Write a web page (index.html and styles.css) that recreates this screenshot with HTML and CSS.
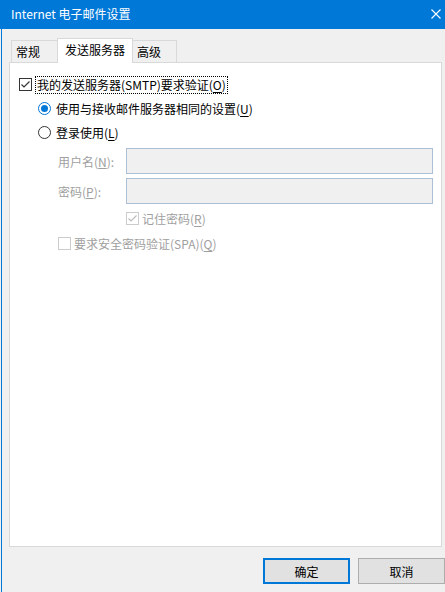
FILE: index.html
```html
<!DOCTYPE html>
<html lang="zh-CN">
<head>
    <meta charset="UTF-8">
    <title>Internet 电子邮件设置</title>
    <link rel="stylesheet" href="styles.css">
</head>
<body>
    <div class="window">
        <div class="titlebar">
            <span class="title">Internet 电子邮件设置</span>
            <svg class="close" width="10" height="10" viewBox="0 0 10 10">
                <path d="M0.5 0.5 L9.5 9.5 M9.5 0.5 L0.5 9.5" stroke="#fff" stroke-width="1.1" fill="none"/>
            </svg>
        </div>

        <div class="client">
            <div class="tabs">
                <div class="tab tab-first">常规</div>
                <div class="tab active">发送服务器</div>
                <div class="tab tab-last">高级</div>
            </div>

            <div class="panel">
                <div class="row row-auth">
                    <span class="check">
                        <svg width="11" height="11" viewBox="0 0 11 11"><path d="M1.5 5.5 L4 8 L9.5 2.5" stroke="#333" stroke-width="1.2" fill="none"/></svg>
                    </span>
                    <span class="text focus">我的发送服务器(SMTP)要求验证(<u>O</u>)</span>
                </div>

                <div class="row row-radio">
                    <span class="radio on"><span class="dot"></span></span>
                    <span class="text">使用与接收邮件服务器相同的设置(<u>U</u>)</span>
                </div>

                <div class="row row-radio">
                    <span class="radio"></span>
                    <span class="text">登录使用(<u>L</u>)</span>
                </div>

                <div class="field field-user">
                    <label class="field-label">用户名(<u>N</u>):</label>
                    <div class="input"></div>
                </div>

                <div class="field field-pass">
                    <label class="field-label">密码(<u>P</u>):</label>
                    <div class="input"></div>
                </div>

                <div class="row row-remember">
                    <span class="check disabled">
                        <svg width="11" height="11" viewBox="0 0 11 11"><path d="M1.5 5.5 L4 8 L9.5 2.5" stroke="#bcbcbc" stroke-width="1.2" fill="none"/></svg>
                    </span>
                    <span class="text muted">记住密码(<u>R</u>)</span>
                </div>

                <div class="row row-spa">
                    <span class="check disabled"></span>
                    <span class="text muted">要求安全密码验证(SPA)(<u>Q</u>)</span>
                </div>
            </div>

            <div class="buttons">
                <button class="btn btn-default">确定</button>
                <button class="btn">取消</button>
            </div>
        </div>
    </div>
</body>
</html>
```

FILE: styles.css
```css
:root {
    --accent: #0078d7;
    --face: #f0f0f0;
    --tab-border: #d9d9d9;
    --muted: #a0a0a0;
}

body {
    margin: 0;
    background-color: var(--face);
    font-family: "Noto Sans CJK SC", "Noto Sans", sans-serif;
    font-size: 12px;
    color: #000;
}

.window {
    width: 445px;
    height: 592px;
    display: flex;
    flex-direction: column;
    overflow: hidden;
}

/* title bar */
.titlebar {
    height: 29px;
    flex: none;
    background-color: var(--accent);
    display: flex;
    align-items: center;
    justify-content: space-between;
    padding: 0 4px 0 11px;
}

.title {
    color: #fff;
    font-size: 12px;
    line-height: 16px;
    margin-top: -1px;
}

.close {
    display: block;
    margin-top: -2px;
}

/* client area */
.client {
    flex: 1;
    margin-left: 1px;
    border-left: 1px solid var(--accent);
    padding-left: 7px;
    display: flex;
    flex-direction: column;
}

.tabs {
    display: flex;
    align-items: flex-end;
    height: 25px;
    padding-top: 9px;
    padding-left: 2px;
    margin-bottom: -1px;
}

.tab {
    box-sizing: border-box;
    height: 22px;
    margin-bottom: 1px;
    border: 1px solid var(--tab-border);
    border-bottom: none;
    background-color: var(--face);
    line-height: 20px;
    padding-top: 1px;
}

.tab-first {
    width: 46px;
    padding-left: 4px;
    border-right: none;
}

.tab-last {
    width: 44px;
    padding-left: 4px;
    border-left: none;
}

.tab.active {
    position: relative;
    z-index: 1;
    width: 76px;
    height: 25px;
    margin-bottom: 0;
    background-color: #fff;
    text-align: center;
    line-height: 21px;
    padding-top: 0;
}

.panel {
    box-sizing: border-box;
    width: 433px;
    height: 485px;
    background-color: #fff;
    border: 1px solid var(--tab-border);
    padding: 10px 0 0 9px;
}

/* rows */
.row {
    display: flex;
    align-items: flex-start;
    height: 24px;
}

.text {
    line-height: 24px;
    white-space: nowrap;
}

.text u {
    text-decoration: underline;
    text-underline-offset: 2px;
}

.check {
    box-sizing: border-box;
    width: 13px;
    height: 13px;
    margin-top: 5px;
    border: 1px solid #333;
    background-color: #fff;
    flex: none;
}

.check svg {
    display: block;
}

.check.disabled {
    border-color: #cccccc;
}

.radio {
    box-sizing: border-box;
    width: 13px;
    height: 13px;
    margin-top: 5px;
    border: 1px solid #333;
    border-radius: 50%;
    background-color: #fff;
    flex: none;
    display: flex;
    align-items: center;
    justify-content: center;
}

.radio.on {
    border-color: var(--accent);
}

.radio .dot {
    width: 7px;
    height: 7px;
    border-radius: 50%;
    background-color: var(--accent);
}

.row-auth .text.focus {
    margin-left: 4px;
    margin-top: 4px;
    line-height: 16px;
    padding: 0 1px;
    outline: 1px dotted #000;
}

.row-radio {
    padding-left: 19px;
}

.row-radio .text {
    margin-left: 5px;
}

.field {
    display: flex;
    align-items: center;
    padding-left: 39px;
}

.field-user {
    margin-top: 3px;
}

.field-pass {
    margin-top: 4px;
}

.field-label {
    width: 68px;
    color: var(--muted);
}

.input {
    box-sizing: border-box;
    width: 307px;
    height: 26px;
    background-color: var(--face);
    border: 1px solid #abbfd6;
}

.row-remember {
    margin-top: 3px;
    padding-left: 107px;
}

.row-spa {
    margin-top: 1px;
    padding-left: 39px;
}

.row-remember .text,
.row-spa .text {
    margin-left: 3px;
}

.muted {
    color: var(--muted);
}

/* dialog buttons */
.buttons {
    display: flex;
    justify-content: flex-end;
    gap: 8px;
    margin-top: 11px;
}

.btn {
    box-sizing: border-box;
    width: 87px;
    height: 26px;
    background-color: #e1e1e1;
    border: 1px solid #adadad;
    font-family: inherit;
    font-size: 12px;
    color: #000;
    padding: 0;
}

.btn-default {
    border: 2px solid var(--accent);
}
```
